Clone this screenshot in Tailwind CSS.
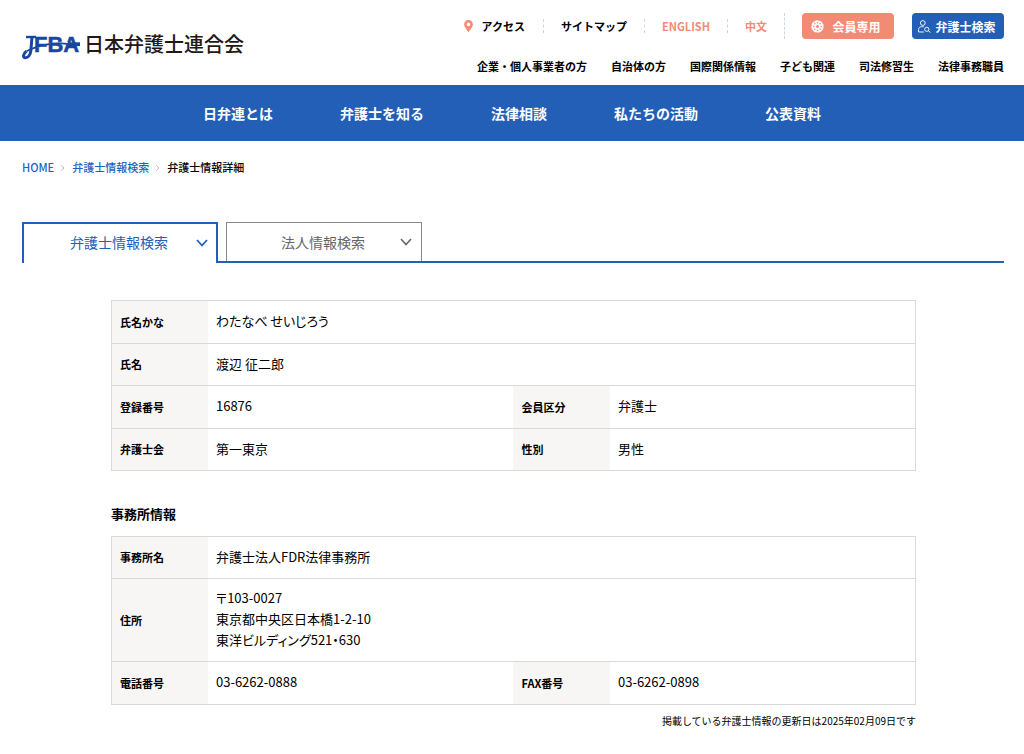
<!DOCTYPE html>
<html lang="ja">
<head>
<meta charset="utf-8">
<meta name="viewport" content="width=device-width, initial-scale=1">
<title>弁護士情報詳細 | 日本弁護士連合会</title>
<script src="https://cdn.jsdelivr.net/npm/@tailwindcss/browser@4"></script>
</head>
<body class="bg-white text-black font-['Noto_Sans_CJK_JP','Noto_Sans',sans-serif] text-[11px] leading-[21px] font-medium">
<header class="flex justify-between pl-[22px] pr-5 pt-[13px] pb-2">
  <a href="#" class="flex items-center pb-1 text-[20px] text-[#231815] font-medium whitespace-nowrap" aria-label="JFBA 日本弁護士連合会">
    <svg class="w-[62px] h-9 shrink-0" viewBox="0 -1 62 36" fill="none">
      <text x="12" y="26" fill="#17479e" stroke="#17479e" stroke-width=".5" font-family="Liberation Sans" font-weight="700" font-size="22">FBA</text>
      <path d="M15 21.500C26 17 40 15.500 46 16.500" stroke="#fff" stroke-width=".8"/>
      <path d="M4 11h10" stroke="#17479e" stroke-width="2.400"/>
      <path d="M10 11 8.800 25c-.5 4-2.800 6.800-5.300 6.800-3 0-2.500-4 1-6.500" stroke="#17479e" stroke-width="3"/>
      <path d="M4.500 25.300C17 18.500 34 16 47 18.200" stroke="#17479e" stroke-width="1.800"/>
      <path d="M46 18.200h12" stroke="#17479e" stroke-width="3.800"/>
    </svg>
    <span>日本弁護士連合会</span>
  </a>
  <div class="flex flex-col items-end gap-[17px] whitespace-nowrap font-bold">
    <ul class="flex items-center h-[26px]">
      <li class="pr-[18px]"><a href="#" class="flex items-center gap-2">
        <svg class="w-[9px] h-3" viewBox="0 0 9 12"><path fill="#f58b75" fill-rule="evenodd" d="M4.500 0A4.400 4.400 0 0 0 .1 4.400C.1 7 4.500 12 4.500 12S8.900 7 8.900 4.400A4.400 4.400 0 0 0 4.500 0m0 2.600a1.800 1.800 0 1 1 0 3.600 1.800 1.800 0 0 1 0-3.600"/></svg>アクセス</a></li>
      <li class="flex items-center h-[14px] border-l border-dashed border-[#ccd6e0] px-[17px]"><a href="#">サイトマップ</a></li>
      <li class="flex items-center h-[14px] border-l border-dashed border-[#ccd6e0] px-[17px]"><a href="#" class="text-[#f58b75]">ENGLISH</a></li>
      <li class="flex items-center h-[14px] border-l border-dashed border-[#ccd6e0] px-[17px]"><a href="#" class="text-[#f58b75]">中文</a></li>
      <li class="flex items-center h-[26px] border-l border-dashed border-[#ccd6e0] pl-[17px]"><a href="#" class="flex items-center justify-center gap-2 w-[92px] h-[26px] pr-1 rounded bg-[#f38b74] text-white text-[12px]">
        <svg class="w-[13px] h-[13px]" viewBox="0 0 13 13"><circle cx="6.500" cy="6.500" r="6.200" fill="#fff"/><circle cx="6.500" cy="6.500" r="1.500" fill="#f38b74"/><g fill="#f38b74"><circle cx="6.500" cy="2.700" r=".8"/><circle cx="6.500" cy="10.300" r=".8"/><circle cx="2.700" cy="6.500" r=".8"/><circle cx="10.300" cy="6.500" r=".8"/><circle cx="3.800" cy="3.800" r=".8"/><circle cx="9.200" cy="3.800" r=".8"/><circle cx="3.800" cy="9.200" r=".8"/><circle cx="9.200" cy="9.200" r=".8"/></g><circle cx="6.500" cy="6.500" r="6.200" fill="none" stroke="#f38b74" stroke-width="1" stroke-dasharray=".9 3.970"/></svg>会員専用</a></li>
      <li class="pl-[18px]"><a href="#" class="flex items-center justify-center gap-1 w-[92px] h-[26px] pr-[2px] rounded bg-[#235eb7] text-white text-[12px]">
        <svg class="w-[13px] h-[13px]" viewBox="0 0 13 13" fill="none" stroke="#fff" stroke-width=".9"><circle cx="4.800" cy="3" r="2.400"/><path d="M6 12H.6V9.500c0-1.700 1.300-2.800 2.800-2.800h2.300"/><circle cx="8.800" cy="9.300" r="2.100"/><path d="m10.400 10.800 2.100 1.800"/></svg>弁護士検索</a></li>
    </ul>
    <ul class="flex gap-6">
      <li><a href="#">企業・個人事業者の方</a></li>
      <li><a href="#">自治体の方</a></li>
      <li><a href="#">国際関係情報</a></li>
      <li><a href="#">子ども関連</a></li>
      <li><a href="#">司法修習生</a></li>
      <li><a href="#">法律事務職員</a></li>
    </ul>
  </div>
</header>
<nav class="bg-[#235eb7] text-white text-[14px] font-bold">
  <ul class="flex justify-center items-center gap-[67px] h-14">
    <li><a href="#">日弁連とは</a></li>
    <li><a href="#">弁護士を知る</a></li>
    <li><a href="#">法律相談</a></li>
    <li><a href="#">私たちの活動</a></li>
    <li><a href="#">公表資料</a></li>
  </ul>
</nav>
<main class="pl-[22px] pr-5 pt-4">
  <ol class="flex items-center gap-[7px]">
    <li><a href="#" class="text-[#1f62bd]">HOME</a></li>
    <li aria-hidden="true"><svg class="w-1 h-[6px]" viewBox="0 0 4 6" fill="none" stroke="#bbb"><path d="m.5.500 2.500 2.500-2.500 2.500"/></svg></li>
    <li><a href="#" class="text-[#1f62bd]">弁護士情報検索</a></li>
    <li aria-hidden="true"><svg class="w-1 h-[6px]" viewBox="0 0 4 6" fill="none" stroke="#bbb"><path d="m.5.500 2.500 2.500-2.500 2.500"/></svg></li>
    <li>弁護士情報詳細</li>
  </ol>
  <div class="flex mt-11 text-[14px] font-normal">
    <button class="flex items-center justify-between w-[196px] h-[41px] pl-[46px] pr-2 pb-[2px] border-2 border-b-0 border-[#235eb7] text-[#235eb7]">弁護士情報検索
      <svg class="w-3 h-2" viewBox="0 0 12 8" fill="none" stroke="currentColor" stroke-width="1.800"><path d="m1 1 5 5.500L11 1"/></svg></button>
    <div class="flex-1 flex pl-2 border-b-2 border-[#235eb7]">
      <button class="flex items-center justify-between w-[196px] pl-[54px] pr-[9px] border border-b-0 border-[#888] text-[#666]">法人情報検索
        <svg class="w-3 h-2" viewBox="0 0 12 8" fill="none" stroke="currentColor" stroke-width="1.600"><path d="m1 1 5 5.500L11 1"/></svg></button>
    </div>
  </div>
  <div class="mt-[37px] ml-[89px] mr-[88px]">
    <table class="w-full table-fixed border-collapse border border-[#d9d9d9] text-left text-[13px] [font-feature-settings:'palt']">
      <colgroup><col class="w-[12%]"><col class="w-[38%]"><col class="w-[12%]"><col class="w-[38%]"></colgroup>
      <tbody class="[&_th]:bg-[#f7f6f4] [&_th]:text-[11px] [&_th]:font-bold [&_th]:px-2 [&_td]:px-2 [&_td]:pt-[8px] [&_td]:pb-[11px] [&_td]:font-normal [&_tr]:border-b [&_tr]:border-[#d9d9d9]">
        <tr class="h-[43px]"><th scope="row">氏名かな</th><td colspan="3">わたなべ せいじろう</td></tr>
        <tr class="h-[42px]"><th scope="row">氏名</th><td colspan="3">渡辺 征二郎</td></tr>
        <tr class="h-[43px]"><th scope="row">登録番号</th><td>16876</td><th scope="row">会員区分</th><td>弁護士</td></tr>
        <tr class="h-[42px]"><th scope="row">弁護士会</th><td>第一東京</td><th scope="row">性別</th><td>男性</td></tr>
      </tbody>
    </table>
    <h2 class="mt-8 mb-3 text-[13px] font-bold">事務所情報</h2>
    <table class="w-full table-fixed border-collapse border border-[#d9d9d9] text-left text-[13px] [font-feature-settings:'palt']">
      <colgroup><col class="w-[12%]"><col class="w-[38%]"><col class="w-[12%]"><col class="w-[38%]"></colgroup>
      <tbody class="[&_th]:bg-[#f7f6f4] [&_th]:text-[11px] [&_th]:font-bold [&_th]:px-2 [&_td]:px-2 [&_td]:pt-[8px] [&_td]:pb-[11px] [&_td]:font-normal [&_tr]:border-b [&_tr]:border-[#d9d9d9]">
        <tr class="h-[42px]"><th scope="row">事務所名</th><td colspan="3">弁護士法人FDR法律事務所</td></tr>
        <tr><th scope="row">住所</th><td colspan="3">〒103-0027<br>東京都中央区日本橋1-2-10<br>東洋ビルディング521・630</td></tr>
        <tr class="h-[43px]"><th scope="row">電話番号</th><td>03-6262-0888</td><th scope="row">FAX番号</th><td>03-6262-0898</td></tr>
      </tbody>
    </table>
    <p class="mt-[5px] text-right text-[10px] font-normal">掲載している弁護士情報の更新日は2025年02月09日です</p>
  </div>
</main>
</body>
</html>
